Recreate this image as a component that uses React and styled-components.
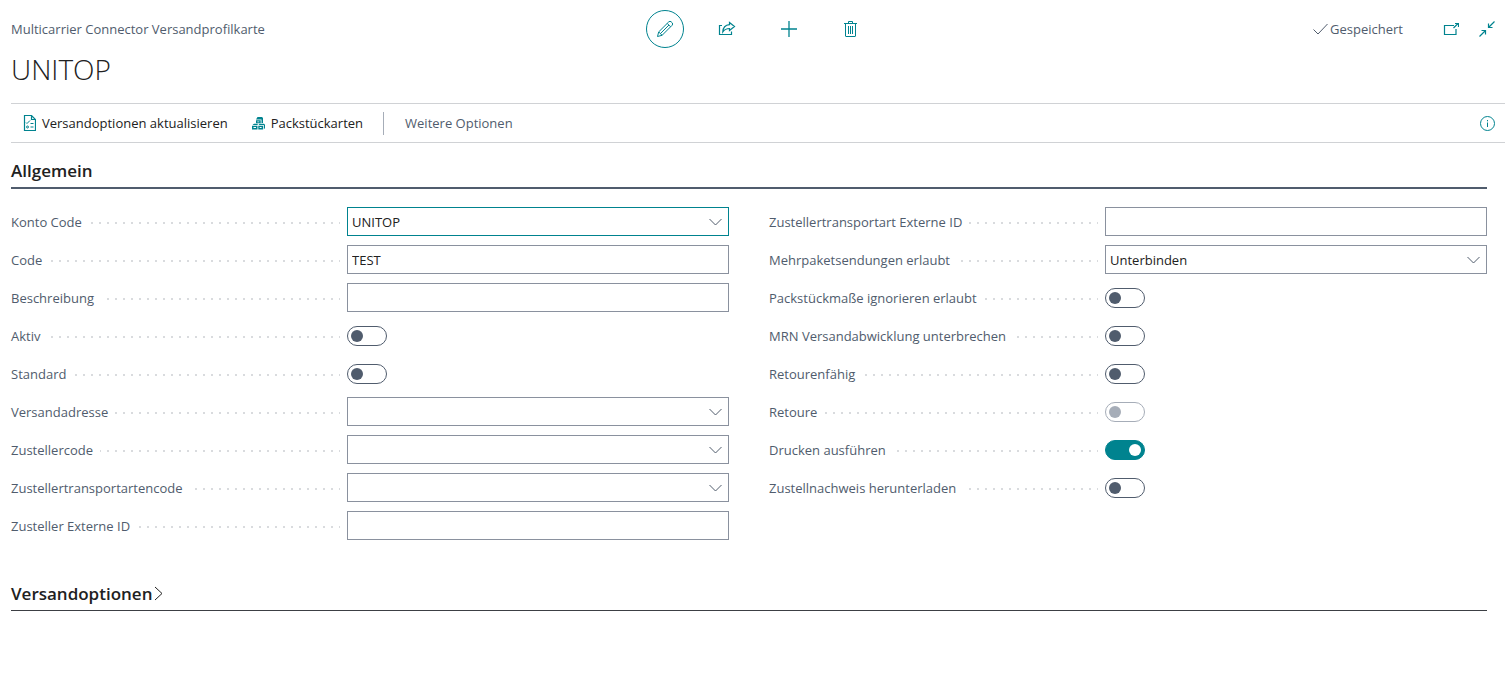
import { useState } from "react";
import styled, { createGlobalStyle, css } from "styled-components";

const teal = "#00838f";
const slate = "#505c6d";
const ink = "#212121";

const GlobalStyle = createGlobalStyle`
  * {
    box-sizing: border-box;
  }

  body {
    margin: 0;
    background: #fff;
    color: ${slate};
    font-family: "Open Sans", "Noto Sans", sans-serif;
    font-size: 13px;
    line-height: 20px;
  }

  button, input, select {
    font: inherit;
    color: inherit;
  }
`;

const Page = styled.div`
  padding-left: 11px;
`;

const Header = styled.header`
  padding: 10px 1px 0 0;
`;

const TopBar = styled.div`
  display: grid;
  grid-template-columns: 1fr auto 1fr;
  align-items: center;
`;

const Commands = styled.div`
  display: flex;
  gap: 24px;
`;

const IconButton = styled.button`
  display: inline-flex;
  align-items: center;
  justify-content: center;
  flex: none;
  width: ${(props) => (props.$small ? "16px" : "38px")};
  height: ${(props) => (props.$small ? "16px" : "38px")};
  padding: 0;
  border: ${(props) => (props.$ringed ? `1px solid ${teal}` : "none")};
  border-radius: 50%;
  background: none;
  color: ${teal};
  cursor: pointer;
`;

const Status = styled.div`
  display: flex;
  align-items: center;
  justify-content: flex-end;
  padding-right: 10px;
  gap: 20px;
`;

const Saved = styled.span`
  display: flex;
  align-items: center;
  gap: 2px;
  margin-right: 20px;
`;

const Title = styled.h1`
  margin: 0;
  padding: 1px 0 14px;
  color: ${ink};
  font-size: 28px;
  font-weight: 300;
  line-height: 40px;
`;

const ActionBar = styled.nav`
  display: flex;
  align-items: center;
  height: 40px;
  padding: 0 10px 0 12px;
  border-top: 1px solid #d0d2d5;
  border-bottom: 1px solid #d0d2d5;
`;

const Action = styled.button`
  display: flex;
  align-items: center;
  gap: 6px;
  margin-right: 24px;
  padding: 0;
  border: none;
  background: none;
  color: ${(props) => (props.$muted ? slate : ink)};
  cursor: pointer;

  svg {
    color: ${teal};
  }
`;

const Divider = styled.span`
  width: 1px;
  height: 23px;
  margin-right: 21px;
  margin-left: -4px;
  background: #a6adb8;
`;

const Spacer = styled.span`
  flex: 1;
`;

const Content = styled.main`
  padding-right: 19px;
`;

const SectionTitle = styled.h2`
  margin: 0;
  padding: 15px 0 4px;
  border-bottom: ${(props) => (props.$collapsed ? "1px solid #3c3f44" : `2px solid ${slate}`)};
  color: ${ink};
  font-size: 17px;
  font-weight: 600;
  line-height: 25px;
`;

const ToggleSection = styled.button`
  display: flex;
  align-items: center;
  gap: 2px;
  padding: 0;
  border: none;
  background: none;
  cursor: pointer;
`;

const Columns = styled.div`
  display: grid;
  grid-template-columns: 1fr 1fr;
  gap: 40px;
  padding: 18px 0 26px;
`;

const Column = styled.div`
  display: flex;
  flex-direction: column;
  gap: 9px;
`;

const FieldRow = styled.div`
  display: grid;
  grid-template-columns: 336fr 382fr;
  align-items: center;
  height: 29px;
`;

const Leader = styled.div`
  display: flex;
  margin-right: 7px;
  background: linear-gradient(to right, #d9dbde 2px, transparent 2px) 0 10px / 8px 2px repeat-x;
`;

const Label = styled.label`
  padding-right: 7px;
  background: #fff;
  white-space: nowrap;
`;

const boxStyle = css`
  width: 100%;
  padding: 0 4px;
  border: 1px solid ${(props) => (props.$focused ? teal : "#8a919e")};
  border-radius: 0;
  outline: none;
  background: #fff;
  color: ${ink};
`;

const TextBox = styled.input`
  ${boxStyle}
  height: 29px;
`;

const SelectBox = styled.select`
  ${boxStyle}
  height: 29px;
  appearance: none;
`;

const Lookup = styled.div`
  position: relative;
  display: flex;
`;

const LookupArrow = styled.span`
  position: absolute;
  top: 0;
  right: 7px;
  bottom: 0;
  display: flex;
  align-items: center;
  pointer-events: none;
`;

const Switch = styled.input`
  appearance: none;
  display: flex;
  align-items: center;
  width: 40px;
  height: 20px;
  margin: 0;
  padding: 0 3px;
  border: 1px solid ${slate};
  border-radius: 10px;
  background: #fff;

  &::before {
    content: "";
    width: 12px;
    height: 12px;
    border-radius: 50%;
    background: ${slate};
  }

  &:checked {
    justify-content: flex-end;
    border-color: ${teal};
    background: ${teal};
  }

  &:checked::before {
    background: #fff;
  }

  &:disabled {
    border-color: #a6adb8;
  }

  &:disabled::before {
    background: #a6adb8;
  }
`;

function Icon({ width = 16, height = 16, children }) {
  return (
    <svg
      width={width}
      height={height}
      viewBox={`0 0 ${width} ${height}`}
      fill="none"
      stroke="currentColor"
      aria-hidden="true"
    >
      {children}
    </svg>
  );
}

const PencilIcon = () => (
  <Icon width={18} height={18}>
    <path d="M1.5 16.5l1.2-4.6L12.6 2a1.9 1.9 0 0 1 2.8 0l.6.6a1.9 1.9 0 0 1 0 2.8l-9.9 9.9zM2.7 11.9l3.4 3.4M11.2 3.4l3.4 3.4M4.4 13.6l8.6-8.6" />
  </Icon>
);

const ShareIcon = () => (
  <Icon width={18} height={16}>
    <path d="M4 4.500H1.500v9h12V10.500" strokeWidth="1.200" />
    <path d="M11.500 1.500l5 4-5 4V7.500C8.500 7.500 6.500 8.500 4.800 11 5 7 7.500 4 11.500 3.700z" strokeWidth="1.200" />
  </Icon>
);

const PlusIcon = () => (
  <Icon>
    <path d="M8 0v16M0 8h16" strokeWidth="1.300" />
  </Icon>
);

const TrashIcon = () => (
  <Icon width={14} height={16}>
    <path d="M0 2.500h13M4.500 2.500V.5h4v2M1.500 2.500v12.500q0 .5.5.5h9q.5 0 .5-.5V2.500M4.500 5v8M6.500 5v8M8.500 5v8" />
  </Icon>
);

const CheckIcon = () => (
  <Icon width={15} height={12}>
    <path d="M.5 6.500l4.500 4.500L14.500 1" />
  </Icon>
);

const PopOutIcon = () => (
  <Icon>
    <path d="M11 4.500H1.500v9h11.500V8" strokeWidth="1.200" />
    <path d="M10.500 7L15 2.500M12 2.500h3.500V6" strokeWidth="1.200" />
  </Icon>
);

const CollapseIcon = () => (
  <Icon>
    <path d="M15.500.5l-6 6M9.500 2.500v4H13.500M.5 15.500l6-6M2.500 9.500h4V13.500" strokeWidth="1.200" />
  </Icon>
);

const InfoIcon = () => (
  <Icon width={15} height={15}>
    <circle cx="7.500" cy="7.500" r="7" />
    <path d="M7.500 6.500v4.500M7.500 4v1.300" />
  </Icon>
);

const ChecklistIcon = () => (
  <Icon width={13} height={16}>
    <path d="M1.500.5h7l4 4v11h-11zM8.500.5v4h4" strokeWidth="1.200" />
    <path d="M3 7.500l1 1 3-3M7.500 8.500h3M7.500 12h3" />
    <circle cx="4.500" cy="12" r="1" />
  </Icon>
);

const PackagesIcon = () => (
  <Icon width={13} height={13}>
    <g fill="currentColor" stroke="none" fillRule="evenodd">
      <path d="M5.500 0H10l1 1v5h-1.500V2.500H4zM4 3.300h4.700V6.300H4zM5.300 4.500v.8h2v-.8z" />
      <path d="M2 6.800h4L5.500 8H.5zM7.500 6.800H12l1 1V11l-1.200 1.500V8H6.500z" />
      <path d="M0 8.700h5.500v3.800H0zM1.500 10.100v1H4v-1zM6.300 8.700H11v3.800H6.300zM7.600 10.100v1h2v-1z" />
    </g>
  </Icon>
);

const ChevronDown = () => (
  <Icon width={13} height={8}>
    <path d="M.5 1l6 6 6-6" />
  </Icon>
);

const ChevronRight = () => (
  <Icon width={9} height={15}>
    <path d="M1 1l7 6.500-7 6.500" />
  </Icon>
);

const leftFields = [
  { id: "konto", label: "Konto Code", type: "lookup", value: "UNITOP", focused: true },
  { id: "code", label: "Code", type: "text", value: "TEST" },
  { id: "beschreibung", label: "Beschreibung", type: "text" },
  { id: "aktiv", label: "Aktiv", type: "switch" },
  { id: "standard", label: "Standard", type: "switch" },
  { id: "adresse", label: "Versandadresse", type: "lookup" },
  { id: "zusteller", label: "Zustellercode", type: "lookup" },
  { id: "transportart", label: "Zustellertransportartencode", type: "lookup" },
  { id: "externe-id", label: "Zusteller Externe ID", type: "text" },
];

const rightFields = [
  { id: "transport-id", label: "Zustellertransportart Externe ID", type: "text" },
  { id: "mehrpaket", label: "Mehrpaketsendungen erlaubt", type: "select", value: "Unterbinden" },
  { id: "masse", label: "Packstückmaße ignorieren erlaubt", type: "switch" },
  { id: "mrn", label: "MRN Versandabwicklung unterbrechen", type: "switch" },
  { id: "retourenfaehig", label: "Retourenfähig", type: "switch" },
  { id: "retoure", label: "Retoure", type: "switch", disabled: true },
  { id: "drucken", label: "Drucken ausführen", type: "switch", value: true },
  { id: "nachweis", label: "Zustellnachweis herunterladen", type: "switch" },
];

function Control({ field }) {
  const [value, setValue] = useState(field.value || "");
  const onChange = (e) => setValue(e.target.value);

  if (field.type === "switch") {
    return (
      <Switch
        type="checkbox"
        role="switch"
        id={field.id}
        disabled={field.disabled}
        defaultChecked={field.value}
      />
    );
  }

  if (field.type === "text") {
    return <TextBox id={field.id} value={value} onChange={onChange} />;
  }

  return (
    <Lookup>
      {field.type === "select" ? (
        <SelectBox id={field.id} value={value} onChange={onChange}>
          <option>{field.value}</option>
        </SelectBox>
      ) : (
        <TextBox id={field.id} value={value} onChange={onChange} $focused={field.focused} />
      )}
      <LookupArrow>
        <ChevronDown />
      </LookupArrow>
    </Lookup>
  );
}

function Fields({ fields }) {
  return (
    <Column>
      {fields.map((field) => (
        <FieldRow key={field.id}>
          <Leader>
            <Label htmlFor={field.id}>{field.label}</Label>
          </Leader>
          <Control field={field} />
        </FieldRow>
      ))}
    </Column>
  );
}

export default function App() {
  return (
    <Page>
      <GlobalStyle />
      <Header>
        <TopBar>
          <span>Multicarrier Connector Versandprofilkarte</span>
          <Commands>
            <IconButton $ringed aria-label="Bearbeiten">
              <PencilIcon />
            </IconButton>
            <IconButton aria-label="Teilen">
              <ShareIcon />
            </IconButton>
            <IconButton aria-label="Neu">
              <PlusIcon />
            </IconButton>
            <IconButton aria-label="Löschen">
              <TrashIcon />
            </IconButton>
          </Commands>
          <Status>
            <Saved>
              <CheckIcon />
              Gespeichert
            </Saved>
            <IconButton $small aria-label="In neuem Fenster öffnen">
              <PopOutIcon />
            </IconButton>
            <IconButton $small aria-label="Verkleinern">
              <CollapseIcon />
            </IconButton>
          </Status>
        </TopBar>
        <Title>UNITOP</Title>
        <ActionBar>
          <Action>
            <ChecklistIcon />
            Versandoptionen aktualisieren
          </Action>
          <Action>
            <PackagesIcon />
            Packstückarten
          </Action>
          <Divider />
          <Action $muted>Weitere Optionen</Action>
          <Spacer />
          <IconButton $small aria-label="Info">
            <InfoIcon />
          </IconButton>
        </ActionBar>
      </Header>
      <Content>
        <SectionTitle>Allgemein</SectionTitle>
        <Columns>
          <Fields fields={leftFields} />
          <Fields fields={rightFields} />
        </Columns>
        <SectionTitle $collapsed>
          <ToggleSection aria-expanded="false">
            Versandoptionen
            <ChevronRight />
          </ToggleSection>
        </SectionTitle>
      </Content>
    </Page>
  );
}
